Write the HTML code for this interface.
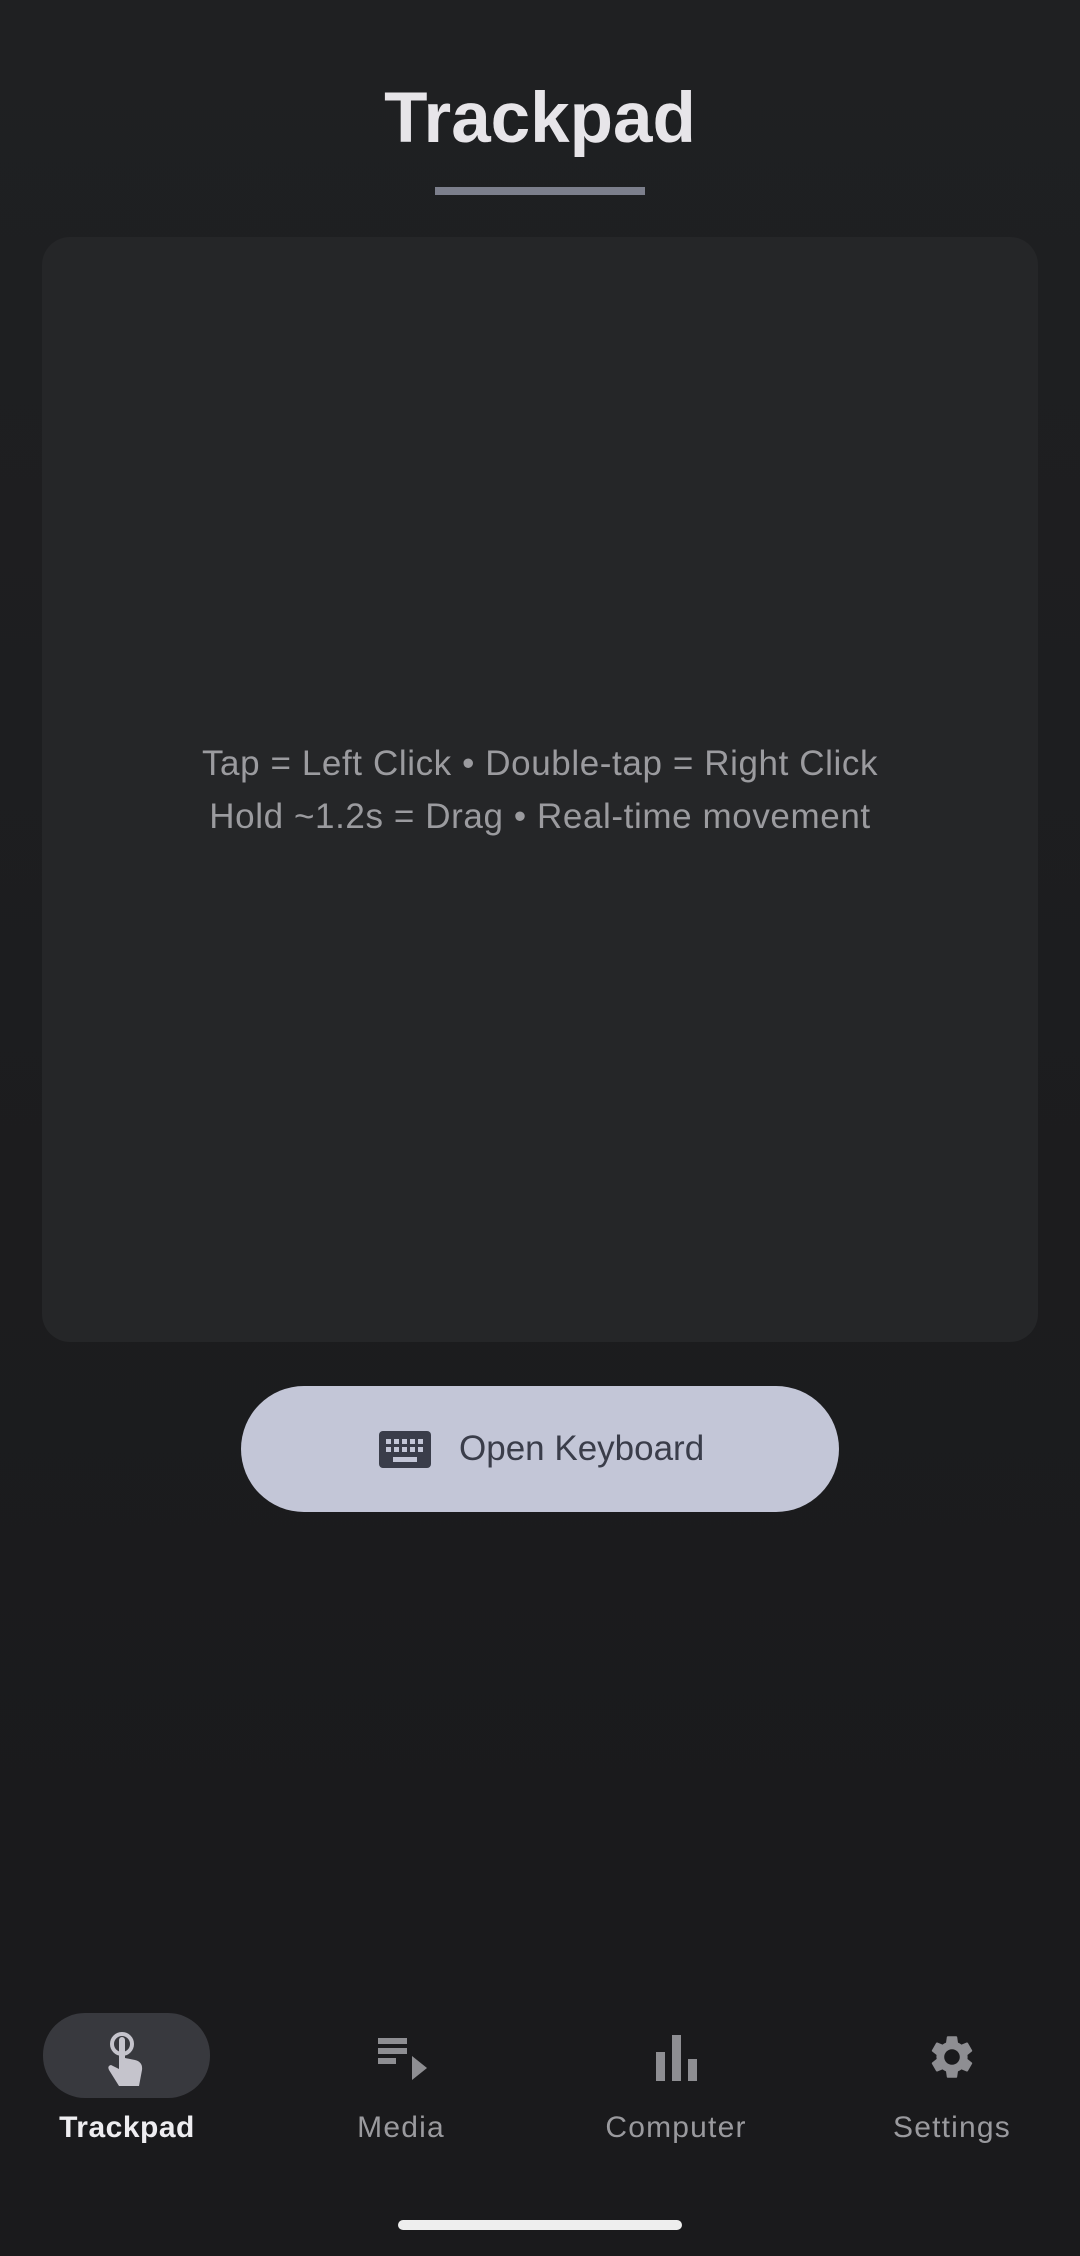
<!DOCTYPE html>
<html><head><meta charset="utf-8"><style>
html,body{margin:0;padding:0}
body{width:1080px;height:2256px;position:relative;overflow:hidden;background:linear-gradient(#1f2022,#19191b);font-family:"Liberation Sans",sans-serif}
.abs{position:absolute}
.title{left:0;width:1080px;text-align:center;top:74px;font-size:71px;font-weight:bold;color:#e7e5e9;line-height:90px}
.ul{left:435px;top:187px;width:210px;height:8px;background:#7c7f8c}
.card{left:42px;top:237px;width:996px;height:1105px;border-radius:28px;background:#252628}
.hint{left:0;width:1080px;text-align:center;color:#9b9b9f;font-size:35px;letter-spacing:0.6px;line-height:53px;top:737px}
.btn{left:241px;top:1386px;width:598px;height:126px;border-radius:63px;background:#c3c6d7}
.btxt{left:459px;top:1424px;font-size:35px;color:#3a3d4a;line-height:50px}
.nav{left:0;top:1982px;width:1080px;height:274px;background:#1a1a1c}
.pill{left:43px;top:2013px;width:167px;height:85px;border-radius:42px;background:#38393e}
.lbl{top:2105px;width:200px;text-align:center;font-size:30px;letter-spacing:1.2px;color:#9a9a9e;line-height:46px}
.home{left:398px;top:2220px;width:284px;height:10px;border-radius:5px;background:#eee}
</style></head><body>
<div class="abs title">Trackpad</div>
<div class="abs ul"></div>
<div class="abs card"></div>
<div class="abs hint">Tap = Left Click • Double-tap = Right Click<br>Hold ~1.2s = Drag • Real-time movement</div>
<div class="abs btn"></div>
<svg class="abs" style="left:379px;top:1431px" width="52" height="37" viewBox="0 0 52 37">
<rect width="52" height="37" rx="4" fill="#3a3d4a"/>
<g fill="#c3c6d7">
<rect x="7" y="8" width="5" height="5"/><rect x="15" y="8" width="5" height="5"/><rect x="23" y="8" width="5" height="5"/><rect x="31" y="8" width="5" height="5"/><rect x="39" y="8" width="5" height="5"/>
<rect x="7" y="16" width="5" height="5"/><rect x="15" y="16" width="5" height="5"/><rect x="23" y="16" width="5" height="5"/><rect x="31" y="16" width="5" height="5"/><rect x="39" y="16" width="5" height="5"/>
<rect x="14" y="26" width="24" height="5"/></g></svg>
<div class="abs btxt">Open Keyboard</div>
<div class="abs nav"></div>
<div class="abs pill"></div>
<svg class="abs" style="left:105px;top:2030px" width="46" height="56" viewBox="0 0 46 56">
<circle cx="17" cy="14" r="10" fill="none" stroke="#c5c4cc" stroke-width="4"/>
<path d="M14 10a3 3 0 0 1 6 0v18l10 2q8 2 7 10l-3 16H14L4 40q-2-4 2-5l8 4z" fill="#c5c4cc"/>
</svg>
<svg class="abs" style="left:378px;top:2038px" width="52" height="44" viewBox="0 0 52 44">
<g fill="#8e8e92"><rect x="0" y="0" width="29" height="6"/><rect x="0" y="10" width="29" height="6"/><rect x="0" y="20" width="18" height="6"/><path d="M34 18l15 12-15 12z"/></g></svg>
<svg class="abs" style="left:655px;top:2035px" width="44" height="46" viewBox="0 0 44 46">
<g fill="#8e8e92"><rect x="1" y="17" width="9" height="29"/><rect x="17" y="0" width="9" height="46"/><rect x="33" y="24" width="9" height="22"/></g></svg>
<svg class="abs" style="left:926px;top:2031px" width="52" height="52" viewBox="0 0 24 24">
<path fill="#8e8e92" d="M19.14 12.94c.04-.3.06-.61.06-.94 0-.32-.02-.64-.07-.94l2.030-1.58a.49.49 0 0 0 .12-.61l-1.92-3.32a.488.488 0 0 0-.59-.22l-2.39.96c-.5-.38-1.030-.7-1.62-.94l-.36-2.54a.484.484 0 0 0-.48-.41h-3.84c-.24 0-.43.17-.47.41l-.36 2.54c-.59.24-1.13.57-1.62.94l-2.39-.96c-.22-.08-.47 0-.59.22L2.74 8.87c-.12.21-.08.47.12.61l2.03 1.58c-.05.3-.09.63-.09.94s.2.64.07.94l-2.03 1.58a.49.49 0 0 0-.12.61l1.92 3.32c.12.22.37.29.59.22l2.39-.96c.5.38 1.03.7 1.62.94l.36 2.54c.05.24.24.41.48.41h3.84c.24 0 .44-.17.47-.41l.36-2.54c.59-.24 1.13-.56 1.62-.94l2.39.96c.22.08.47 0 .59-.22l1.92-3.32c.12-.22.07-.47-.12-.61l-2.01-1.58zM12 15.6c-1.98 0-3.6-1.62-3.6-3.6s1.62-3.6 3.6-3.6 3.6 1.62 3.6 3.6-1.62 3.6-3.6 3.6z"/></svg>
<div class="abs lbl" style="left:27px;color:#eeedf0;font-weight:bold;letter-spacing:0.5px">Trackpad</div>
<div class="abs lbl" style="left:301px">Media</div>
<div class="abs lbl" style="left:576px">Computer</div>
<div class="abs lbl" style="left:852px">Settings</div>
<div class="abs home"></div>
</body></html>
